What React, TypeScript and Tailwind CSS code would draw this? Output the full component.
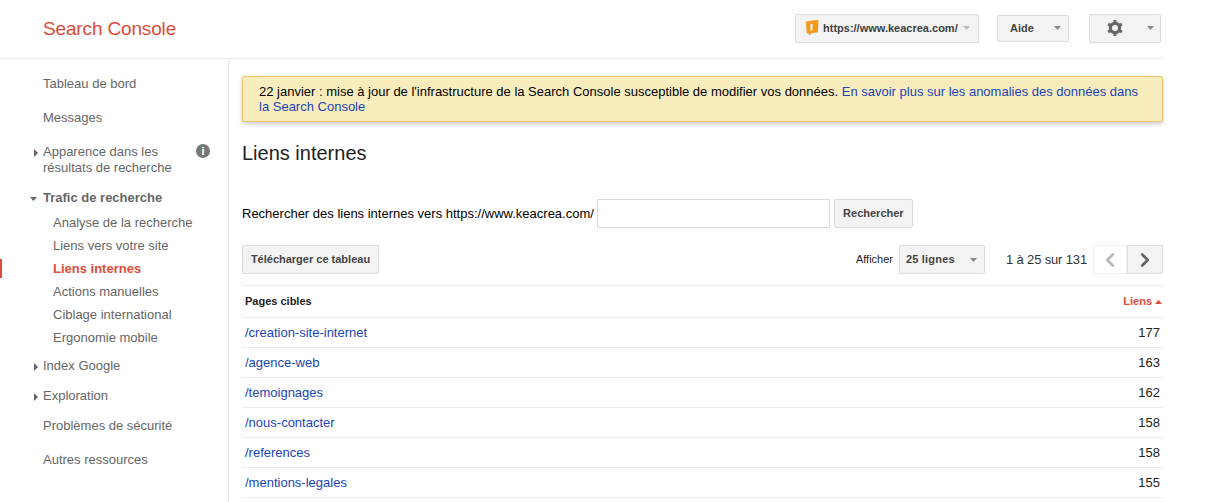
import { ChevronLeft, ChevronRight } from 'lucide-react'

const rows = [
  ['/creation-site-internet', '177'],
  ['/agence-web', '163'],
  ['/temoignages', '162'],
  ['/nous-contacter', '158'],
  ['/references', '158'],
  ['/mentions-legales', '155'],
]

const btn =
  'flex items-center rounded-[2px] border border-[#dcdcdc] bg-[#f3f3f3] text-[11px] font-bold text-[#444]'

function Caret({ color = '#888' }: { color?: string }) {
  return (
    <svg width="7" height="4" viewBox="0 0 7 4" className="shrink-0">
      <path d="M0 0h7L3.5 4z" fill={color} />
    </svg>
  )
}

function SideArrow({ open }: { open?: boolean }) {
  return (
    <span className={`absolute top-[5px] flex h-[8px] w-[7px] items-center justify-center ${open ? 'left-[-13px]' : 'left-[-11px]'}`}>
      <svg width="7" height="8" viewBox="0 0 7 8">
        {open ? <path d="M0 2h7L3.5 6z" fill="#666" /> : <path d="M2 0l4 4-4 4z" fill="#666" />}
      </svg>
    </span>
  )
}

function Gear() {
  return (
    <svg width="18" height="18" viewBox="0 0 18 18" fill="none">
      <circle cx="9" cy="9" r="4.6" stroke="#666" strokeWidth="3.2" />
      <g stroke="#666" strokeWidth="3">
        <path d="M9 1v3M9 14v3M2.1 5l2.6 1.5M13.3 11.5l2.6 1.5M2.1 13l2.6-1.5M13.3 6.5 15.9 5" />
      </g>
    </svg>
  )
}

function Logo() {
  return (
    <svg width="14" height="16" viewBox="0 0 14 16" className="shrink-0">
      <path d="M1 2.2Q1 1.4 1.8 1.3L12 0Q13.4 0 13.4 1.2L13 11.6Q13 12.4 12 12.5L7 13 4 15.6 3.6 13.2 2.4 13.2Q1.6 13.2 1.6 12.4z" fill="#f39a1d" />
      <path d="M5.4 4.2 7.6 3.9 7.4 10.2 5.6 10.4z" fill="#fff" />
    </svg>
  )
}

function App() {
  return (
    <div className="h-[502px] w-[1211px] overflow-hidden bg-white font-['Liberation_Sans',Arial,sans-serif] text-[13px]">
      <header className="flex h-[59px] w-[1163px] items-center border-b border-[#ebebeb] pr-[2px] pl-[43px]">
        <span className="text-[19px] leading-[24px] tracking-[-0.15px] text-[#dd4b39]">Search Console</span>
        <div className={`${btn} mt-[-2px] ml-auto h-[29px] w-[184px] pl-[9px]`}>
          <Logo />
          <span className="ml-[4px] text-[#404040]">https://www.keacrea.com/</span>
          <span className="ml-[5px]"><Caret color="#bbb" /></span>
        </div>
        <div className={`${btn} mt-[-2px] ml-[18px] h-[27px] w-[72px] pl-[12px]`}>
          Aide
          <span className="ml-auto pr-[7px]"><Caret /></span>
        </div>
        <div className={`${btn} mt-[-2px] ml-[20px] h-[29px] w-[72px] pl-[16px]`}>
          <Gear />
          <span className="ml-auto pr-[6px]"><Caret /></span>
        </div>
      </header>

      <div className="flex">
        <nav className="relative h-[443px] w-[229px] shrink-0 border-r border-[#ebebeb] pt-[17px] pl-[43px] text-[#666]">
          <span className="absolute top-[200px] left-0 h-[19px] w-[2px] bg-[#dd4b39]" />
          <div className="leading-[16px]">Tableau de bord</div>
          <div className="mt-[18px] leading-[16px]">Messages</div>
          <div className="relative mt-[18px] leading-[16px]">
            <SideArrow />
            Apparence dans les
            <br />
            résultats de recherche
            <span className="absolute top-0 left-[153px] flex h-[14px] w-[14px] items-center justify-center rounded-full bg-[#777] text-[11px] font-bold text-white">
              i
            </span>
          </div>
          <div className="relative mt-[14px] leading-[16px] font-bold">
            <SideArrow open />
            Trafic de recherche
          </div>
          <ul className="mt-[9px] flex flex-col gap-[7px] pl-[10px] leading-[16px]">
            <li>Analyse de la recherche</li>
            <li>Liens vers votre site</li>
            <li className="font-bold text-[#dd4b39]">Liens internes</li>
            <li>Actions manuelles</li>
            <li>Ciblage international</li>
            <li>Ergonomie mobile</li>
          </ul>
          <div className="relative mt-[12px] leading-[16px]">
            <SideArrow />
            Index Google
          </div>
          <div className="relative mt-[14px] leading-[16px]">
            <SideArrow />
            Exploration
          </div>
          <div className="mt-[14px] leading-[16px]">Problèmes de sécurité</div>
          <div className="mt-[18px] leading-[16px]">Autres ressources</div>
        </nav>

        <main className="w-[934px] pt-[17px] pl-[13px] text-[#222]">
          <div className="h-[46px] rounded-[2px] border border-[#f0c36d] bg-[#f9edbe] pt-[7px] pr-[20px] pl-[16px] leading-[15px] text-black shadow-[0_2px_4px_rgba(0,0,0,0.2)]">
            <div>
              22 janvier : mise à jour de l'infrastructure de la Search Console susceptible de modifier vos données.{' '}
              <a className="text-[#1a44b8]">En savoir plus sur les anomalies des données dans</a>
            </div>
            <a className="text-[#1a44b8]">la Search Console</a>
          </div>
          <h1 className="mt-[19px] text-[20px] leading-[24px] text-[#222]">Liens internes</h1>

          <div className="mt-[34px] flex items-center text-black">
            <span>Rechercher des liens internes vers https://www.keacrea.com/</span>
            <div className="ml-[3px] h-[29px] w-[233px] rounded-[1px] border border-[#d9d9d9] bg-white" />
            <div className={`${btn} ml-[4px] h-[29px] w-[79px] justify-center`}>Rechercher</div>
          </div>

          <div className="mt-[17px] flex h-[29px] items-center">
            <div className={`${btn} h-[29px] w-[137px] justify-center`}>Télécharger ce tableau</div>
            <span className="ml-auto text-[11px] text-[#222]">Afficher</span>
            <div className={`${btn} ml-[6px] h-[29px] w-[86px] pl-[6px]`}>
              <span className="tracking-[0.2px]">25 lignes</span>
              <span className="ml-auto pr-[7px]"><Caret /></span>
            </div>
            <span className="ml-[21px] tracking-[-0.15px] text-[#333]">1 à 25 sur 131</span>
            <div className="ml-[6px] flex h-[29px] w-[34px] items-center justify-center rounded-l-[2px] border border-[#f0f0f0] bg-white">
              <ChevronLeft size={22} strokeWidth={3} color="#bbb" />
            </div>
            <div className="flex h-[29px] w-[36px] items-center justify-center rounded-r-[2px] border border-[#dcdcdc] bg-[#f3f3f3]">
              <ChevronRight size={22} strokeWidth={3} color="#666" />
            </div>
          </div>

          <div className="mt-[11px] flex h-[33px] items-center justify-between border-y border-[#ebebeb] pr-[1px] pl-[3px] text-[11px] font-bold">
            <span className="text-[#222]">Pages cibles</span>
            <span className="flex items-center gap-[3px] text-[#dd4b39]">
              Liens
              <svg width="7" height="4" viewBox="0 0 7 4">
                <path d="M0 4h7L3.5 0z" fill="#dd4b39" />
              </svg>
            </span>
          </div>
          {rows.map(([page, count]) => (
            <div key={page} className="flex h-[30px] items-center justify-between border-b border-[#ebebeb] pr-[3px] pl-[3px]">
              <a className="text-[#1a44b8]">{page}</a>
              <span className="text-[#222]">{count}</span>
            </div>
          ))}
        </main>
      </div>
    </div>
  )
}

export default App
